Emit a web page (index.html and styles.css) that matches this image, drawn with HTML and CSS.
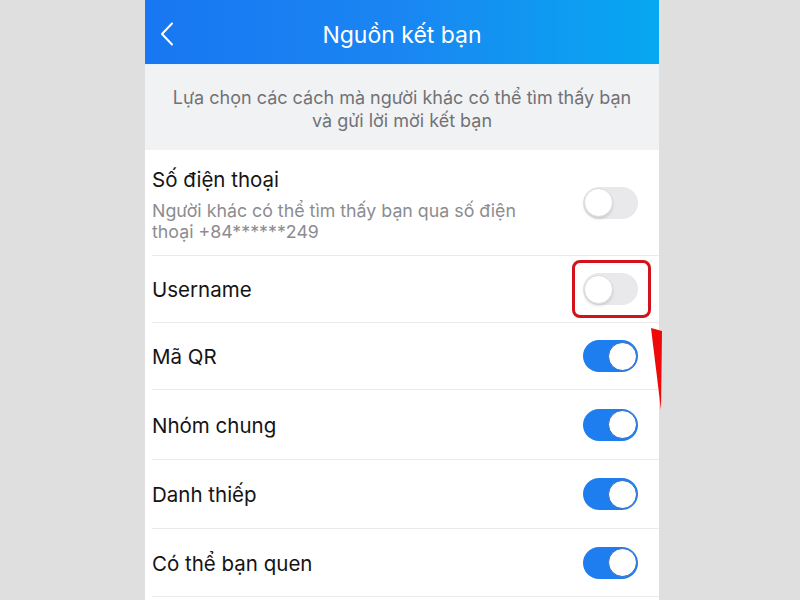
FILE: index.html
```html
<!DOCTYPE html>
<html lang="vi">
<head>
<meta charset="utf-8">
<title>Nguồn kết bạn</title>
<link rel="stylesheet" href="styles.css">
</head>
<body>
<div class="phone">
  <header class="topbar">
    <div class="back">
      <svg width="14" height="24" viewBox="0 0 14 24"><path d="M12 1.5 L2 12 L12 22.5" fill="none" stroke="#fff" stroke-width="2" stroke-linecap="round" stroke-linejoin="round"/></svg>
    </div>
    <h1 class="title">Nguồn kết bạn</h1>
    <div class="spacer"></div>
  </header>
  <div class="desc">Lựa chọn các cách mà người khác có thể tìm thấy bạn và gửi lời mời kết bạn</div>
  <ul class="list">
    <li class="row row-tall">
      <div class="text">
        <div class="label">Số điện thoại</div>
        <div class="sub">Người khác có thể tìm thấy bạn qua số điện thoại +84******249</div>
      </div>
      <span class="toggle off"><span class="knob"></span></span>
    </li>
    <li class="row">
      <div class="label">Username</div>
      <span class="toggle off highlighted"><span class="knob"></span><span class="mark"></span></span>
    </li>
    <li class="row">
      <div class="label">Mã QR</div>
      <span class="toggle on"><span class="knob"></span></span>
    </li>
    <li class="row">
      <div class="label">Nhóm chung</div>
      <span class="toggle on"><span class="knob"></span></span>
    </li>
    <li class="row">
      <div class="label">Danh thiếp</div>
      <span class="toggle on"><span class="knob"></span></span>
    </li>
    <li class="row">
      <div class="label">Có thể bạn quen</div>
      <span class="toggle on"><span class="knob"></span></span>
    </li>
  </ul>
</div>
<svg class="arrow" width="16" height="90" viewBox="0 0 16 90"><polygon points="1,2 12,5 11,84" fill="#ee0a0a"/></svg>
</body>
</html>
```

FILE: styles.css
```css
html, body {
  margin: 0;
  padding: 0;
}
body {
  background: #dfdfdf;
  font-family: Inter, "Liberation Sans", Arial, sans-serif;
  width: 800px;
  height: 600px;
  overflow: hidden;
  position: relative;
}
.phone {
  width: 514px;
  height: 600px;
  margin-left: 145px;
  background: #ffffff;
  overflow: hidden;
}
.topbar {
  height: 64px;
  box-sizing: border-box;
  padding-top: 6px;
  display: grid;
  grid-template-columns: 56px 1fr 56px;
  align-items: center;
  background: linear-gradient(90deg, #1877f2 0%, #1a86f2 50%, #06a8f1 100%);
}
.back {
  padding-left: 15px;
  display: flex;
  align-items: center;
  height: 24px;
  margin-top: -2px;
}
.title {
  margin: 0;
  text-align: center;
  color: #ffffff;
  font-weight: 400;
  font-size: 23px;
  letter-spacing: 0;
}
.desc {
  height: 86px;
  box-sizing: border-box;
  background: #f1f2f4;
  border-top: 1px solid #e6f2fb;
  color: #717276;
  font-size: 18px;
  line-height: 23px;
  text-align: center;
  padding: 21px 24px 0;
}
.list {
  list-style: none;
  margin: 0;
  padding: 0;
}
.row {
  margin-left: 7px;
  height: 68px;
  box-sizing: border-box;
  border-bottom: 1px solid #ebebeb;
  padding-right: 21px;
  display: flex;
  align-items: center;
  justify-content: space-between;
}
.row:nth-child(2) { height: 67px; }
.row:nth-child(3) { height: 67px; }
.row:nth-child(4) { height: 70px; }
.row:nth-child(5) { height: 69px; }
.row-tall {
  height: 106px;
  align-items: center;
}
.row-tall .text {
  padding-top: 2px;
}
.label {
  color: #141414;
  font-size: 20.5px;
  line-height: 24px;
  padding-top: 2px;
}
.sub {
  color: #8c8c90;
  font-size: 17.8px;
  line-height: 21px;
  margin-top: 8px;
  max-width: 400px;
}
.toggle {
  position: relative;
  width: 55px;
  height: 32px;
  border-radius: 16px;
  flex: none;
  box-sizing: border-box;
}
.toggle.off {
  background: #e9e9eb;
}
.toggle.on {
  background: #1e7ef0;
}
.knob {
  position: absolute;
  top: 1.5px;
  width: 29px;
  height: 29px;
  border-radius: 50%;
  background: #ffffff;
  box-sizing: border-box;
}
.off .knob {
  left: 1px;
  border: 1px solid #dcdcdc;
  box-shadow: 0 2px 3px rgba(0, 0, 0, 0.12);
}
.on .knob {
  right: 1.5px;
  border: 1.5px solid #2a68c2;
}
.mark {
  position: absolute;
  left: -11px;
  top: -13px;
  width: 79px;
  height: 58px;
  box-sizing: border-box;
  border: 3px solid #d3121b;
  border-radius: 8px;
}
.arrow {
  position: absolute;
  left: 650px;
  top: 326px;
}
```
